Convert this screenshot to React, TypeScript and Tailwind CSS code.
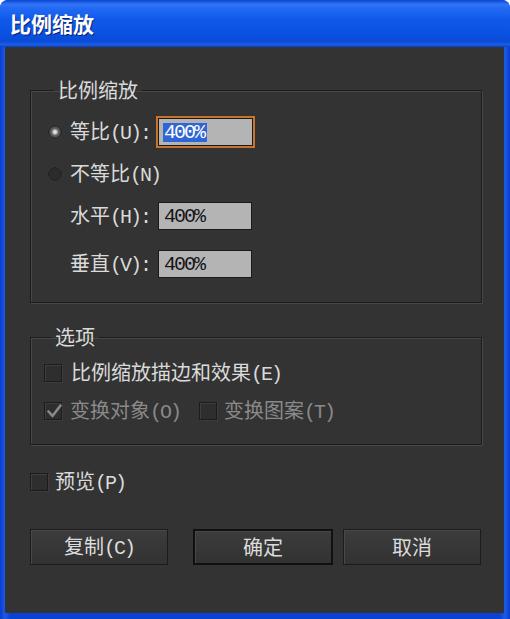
import React from 'react';

// ascii runs use a half-width mono face, like the bitmap font in the dialog
function Txt({ s }: { s: string }) {
  const parts = s.split(/([\x00-\x7F]+)/).filter(Boolean);
  return (
    <span className="whitespace-nowrap">
      {parts.map((p, i) =>
        /^[\x00-\x7F]+$/.test(p) ? (
          <span key={i} className="font-['Liberation_Mono',monospace] text-[20px] tracking-[-2px]">
            {p}
          </span>
        ) : (
          <span key={i}>{p}</span>
        )
      )}
    </span>
  );
}

function Radio({ on }: { on?: boolean }) {
  return (
    <svg width="16" height="16" viewBox="0 0 16 16" className="shrink-0">
      <defs>
        <radialGradient id="rOn" cx="50%" cy="50%" r="50%">
          <stop offset="0%" stopColor="#f4f4f4" />
          <stop offset="28%" stopColor="#c8c8c8" />
          <stop offset="50%" stopColor="#6a6a6a" />
          <stop offset="100%" stopColor="#333333" />
        </radialGradient>
      </defs>
      <circle cx="8" cy="8" r="7.5" fill="#3e3e3e" />
      <circle cx="8" cy="8" r="6.5" fill={on ? 'url(#rOn)' : '#2b2b2b'} stroke="#222222" strokeWidth="1" />
    </svg>
  );
}

function Box({ checked, size = 18 }: { checked?: boolean; size?: number }) {
  return (
    <div
      className="relative shrink-0 border border-[#1c1c1c] bg-[#2e2e2e] shadow-[inset_1px_1px_0_#3f3f3f,1px_1px_0_#3c3c3c]"
      style={{ width: size, height: size }}
    >
      {checked && (
        <svg className="absolute left-[1px] top-[0px]" width="16" height="16" viewBox="0 0 16 16">
          <path d="M2.5 8.5 L6.5 13 L14.5 2.5" fill="none" stroke="#8a8a8a" strokeWidth="2.6" strokeLinecap="round" strokeLinejoin="round" />
        </svg>
      )}
    </div>
  );
}

function Field({ value, focused }: { value: string; focused?: boolean }) {
  return (
    <div
      className={
        focused
          ? 'w-[95px] h-[28px] flex items-center pl-[4px] bg-[#b4b4b4] border border-[#1a1a1a] outline-2 outline-[#c8742f]'
          : 'w-[94px] h-[28px] flex items-center pl-[5px] bg-[#b4b4b4] border border-[#1a1a1a]'
      }
    >
      <span
        className={
          focused
            ? "font-['Liberation_Mono',monospace] text-[20px] tracking-[-2px] leading-[19px] pl-[1px] pr-[3px] bg-[#2f66d4] text-white"
            : "font-['Liberation_Mono',monospace] text-[20px] tracking-[-2px] leading-[19px] text-[#161616]"
        }
      >
        {value}
      </span>
    </div>
  );
}

function Btn({ label, width, primary }: { label: string; width: string; primary?: boolean }) {
  return (
    <button
      className={
        (primary
          ? 'border-2 border-[#101010] '
          : 'border border-[#1c1c1c] ') +
        width +
        ' h-[36px] flex items-center justify-center bg-[linear-gradient(180deg,#3c3c3c,#323232)] shadow-[inset_1px_1px_0_#484848] text-[#dcdcdc] text-[20px] leading-none'
      }
    >
      <Txt s={label} />
    </button>
  );
}

export default function App() {
  return (
    <div className="w-[510px] h-[619px] bg-white">
      <div className="w-[510px] h-[619px] flex flex-col rounded-t-[8px] overflow-hidden bg-[linear-gradient(90deg,#0a3cd0,#1c5ae8_1%,#0a42d4_2%,#0a42d4_98%,#1c5ae8_99%,#0a3cd0)] font-['Noto_Sans_CJK_SC',sans-serif]">
        {/* title bar */}
        <div className="h-[47px] shrink-0 flex items-center pl-[10px] bg-[linear-gradient(180deg,#0a44d4_0%,#2e74f4_9%,#2068f2_20%,#0f5aea_42%,#0a52e2_68%,#0a4bd8_88%,#1a5ee6_95%,#0a40c8_100%)]">
          <span className="text-white text-[21px] font-bold leading-none [text-shadow:1px_1px_0_#0a2270]">
            比例缩放
          </span>
        </div>

        {/* body */}
        <div className="flex-1 ml-[5px] mr-[6px] mb-[6px] bg-[#333333] pl-[25px] pr-[22px] pt-[33px] flex flex-col text-[#dadada] text-[20px]">
          {/* scale group */}
          <fieldset className="border border-[#1c1c1c] shadow-[1px_1px_0_#474747,inset_1px_1px_0_#474747] pl-[16px] pt-[11px] pb-[17px]">
            <legend className="ml-[7px] px-[4px] leading-[20px] text-[20px]">比例缩放</legend>
            <div className="h-[42px] flex items-center">
              <Radio on />
              <div className="ml-[7px] w-[88px] leading-none">
                <Txt s="等比(U):" />
              </div>
              <Field value="400%" focused />
            </div>
            <div className="h-[42px] flex items-center">
              <Radio />
              <div className="ml-[7px] leading-none">
                <Txt s="不等比(N)" />
              </div>
            </div>
            <div className="h-[42px] flex items-center pl-[23px]">
              <div className="w-[88px] leading-none">
                <Txt s="水平(H):" />
              </div>
              <Field value="400%" />
            </div>
            <div className="h-[42px] mt-[6px] flex items-center pl-[23px]">
              <div className="w-[88px] leading-none">
                <Txt s="垂直(V):" />
              </div>
              <Field value="400%" />
            </div>
          </fieldset>

          {/* options group */}
          <fieldset className="mt-[24px] border border-[#1c1c1c] shadow-[1px_1px_0_#474747,inset_1px_1px_0_#474747] pl-[13px] pt-[7px] pb-[14px]">
            <legend className="ml-[7px] px-[4px] leading-[20px] text-[20px]">选项</legend>
            <div className="h-[38px] flex items-center">
              <Box />
              <div className="ml-[9px] leading-none">
                <Txt s="比例缩放描边和效果(E)" />
              </div>
            </div>
            <div className="h-[38px] flex items-center text-[#8a8a8a]">
              <div className="w-[155px] flex items-center">
                <Box checked />
                <div className="ml-[8px] leading-none">
                  <Txt s="变换对象(O)" />
                </div>
              </div>
              <Box />
              <div className="ml-[7px] leading-none">
                <Txt s="变换图案(T)" />
              </div>
            </div>
          </fieldset>

          {/* preview */}
          <div className="mt-[22px] h-[30px] flex items-center">
            <Box />
            <div className="ml-[7px] leading-none">
              <Txt s="预览(P)" />
            </div>
          </div>

          {/* buttons */}
          <div className="mt-[32px] flex items-center">
            <Btn label="复制(C)" width="w-[138px]" />
            <div className="ml-[25px]">
              <Btn label="确定" width="w-[140px]" primary />
            </div>
            <div className="ml-[10px]">
              <Btn label="取消" width="w-[138px]" />
            </div>
          </div>
        </div>
      </div>
    </div>
  );
}
